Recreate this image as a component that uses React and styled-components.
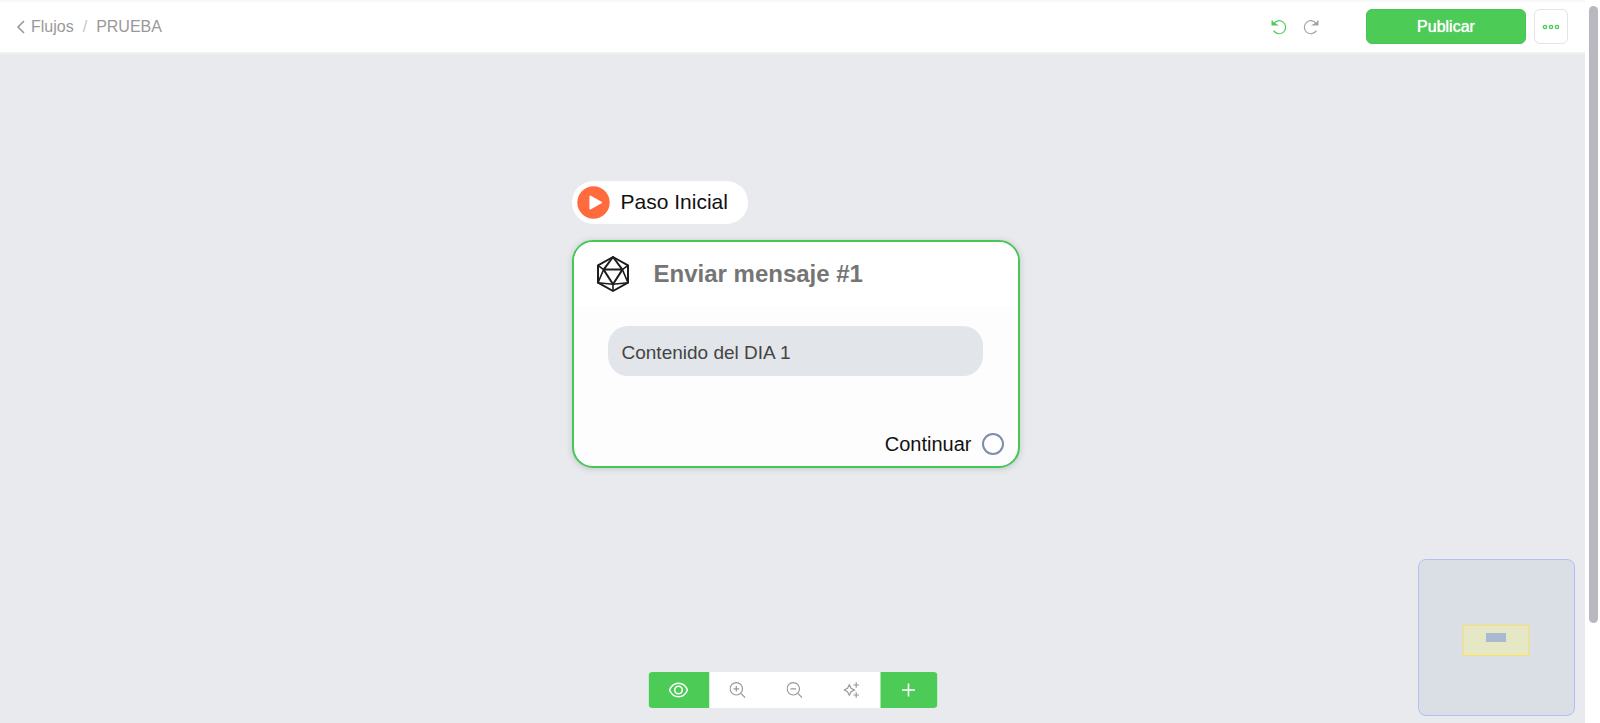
import React from "react";
import styled, { createGlobalStyle } from "styled-components";

const green = "#4dcb57";

const GlobalStyle = createGlobalStyle`
  * { box-sizing: border-box; }
  body {
    margin: 0;
    background: #fff;
    font-family: "Liberation Sans", Arial, sans-serif;
  }
  button { font-family: inherit; cursor: pointer; }
`;

const Page = styled.div`
  display: flex;
  height: 100vh;
  overflow: hidden;
`;

const Main = styled.main`
  flex: 1;
  min-width: 0;
  display: flex;
  flex-direction: column;
`;

const ScrollTrack = styled.div`
  width: 15px;
  flex: none;
  padding: 6px 2px 0 4px;
  background: #fff;
`;

const ScrollThumb = styled.div`
  height: 86%;
  border-radius: 5px;
  background: #b9b8be;
`;

const Header = styled.header`
  display: flex;
  align-items: center;
  justify-content: space-between;
  height: 54px;
  flex: none;
  padding: 0 17px 1px 15px;
  background: #fff;
  border-top: 2px solid #f4f9f8;
  border-bottom: 2px solid #f1f1f4;
`;

const Breadcrumb = styled.nav`
  display: flex;
  align-items: center;
  font-size: 16px;
  line-height: 20px;
  color: #999;
`;

const BackLink = styled.a`
  display: flex;
  align-items: center;
  gap: 4px;
  color: inherit;
  text-decoration: none;
`;

const Separator = styled.span`
  margin: 0 9px;
  color: #c3c6ce;
`;

const Actions = styled.div`
  display: flex;
  align-items: center;
  gap: 8px;
`;

const History = styled.div`
  display: flex;
  gap: 16px;
  margin-right: 39px;
`;

const IconButton = styled.button`
  display: flex;
  padding: 0;
  border: 0;
  background: none;
  color: ${(p) => (p.$active ? green : "#a3a3a3")};
`;

const PublishButton = styled.button`
  width: 160px;
  height: 35px;
  border: 1px solid #47c451;
  border-radius: 6px;
  background: ${green};
  color: #fff;
  font-size: 16px;
  text-shadow: 0 0 1px #fff;
`;

const MoreButton = styled.button`
  display: flex;
  align-items: center;
  justify-content: center;
  width: 34px;
  height: 35px;
  padding: 0;
  border: 1px solid #e3e3e8;
  border-radius: 6px;
  background: #fff;
  color: ${green};
`;

const Canvas = styled.section`
  position: relative;
  flex: 1;
  overflow: hidden;
  background: #e9eaee;
`;

const Node = styled.div`
  position: absolute;
  top: 127px;
  left: calc(50% - 221px);
  width: 448px;
  display: flex;
  flex-direction: column;
  align-items: flex-start;
  gap: 16px;
  color: #111;
`;

const StartPill = styled.div`
  display: flex;
  align-items: center;
  gap: 11px;
  height: 43px;
  padding: 0 20px 1px 5px;
  border-radius: 22px;
  background: #fff;
  font-size: 21px;
`;

const Card = styled.article`
  width: 100%;
  border: 2px solid #45c852;
  border-radius: 21px;
  background: #fdfdfd;
  box-shadow: 0 1px 6px rgba(60, 64, 80, 0.22);
  overflow: hidden;
`;

const CardHeader = styled.div`
  display: flex;
  align-items: center;
  gap: 24px;
  height: 64px;
  padding: 0 22px;
  background: #fff;
`;

const CardTitle = styled.h2`
  margin: 0;
  font-size: 24px;
  line-height: 28px;
  color: #757575;
`;

const Message = styled.p`
  margin: 20px 35px 0 34px;
  padding: 4px 14px 0;
  border-radius: 20px;
  background: #e2e5ea;
  color: #444;
  font-size: 19px;
  line-height: 46px;
`;

const CardFooter = styled.div`
  display: flex;
  align-items: center;
  justify-content: flex-end;
  gap: 10px;
  margin-top: 57px;
  padding: 0 14px 11px;
  font-size: 20px;
  line-height: 22px;
`;

const Port = styled.button`
  width: 22px;
  height: 22px;
  padding: 0;
  border: 2px solid #7f8daa;
  border-radius: 50%;
  background: #fff;
`;

const Toolbar = styled.div`
  position: absolute;
  bottom: 15px;
  left: 50%;
  transform: translateX(-50%);
  display: flex;
  height: 36px;
  border-radius: 4px;
  background: #fff;
  overflow: hidden;
`;

const ToolButton = styled.button`
  display: flex;
  align-items: center;
  justify-content: center;
  width: ${(p) => (p.$wide ? 61 : 57)}px;
  padding: 0;
  border: 0;
  background: ${(p) => (p.$filled ? green : "#fff")};
  color: ${(p) => (p.$filled ? "#fff" : "#999")};
`;

const MiniMap = styled.div`
  position: absolute;
  right: 10px;
  bottom: 7px;
  display: flex;
  width: 157px;
  height: 157px;
  border: 1px solid #b6bdf5;
  border-radius: 8px;
  background: #dadfe6;
`;

const MiniViewport = styled.div`
  display: flex;
  justify-content: center;
  align-items: flex-start;
  width: 66px;
  height: 31px;
  margin: 65px 0 0 44px;
  padding-top: 7px;
  border: 1px solid #fce35a;
  background: #e6e8c5;
`;

const MiniNode = styled.div`
  width: 20px;
  height: 9px;
  background: #abb8d2;
`;

const Icon = ({ size = 16, width = 1.2, children, ...rest }) => (
  <svg
    width={size}
    height={size}
    viewBox={`0 0 ${size} ${size}`}
    fill="none"
    stroke="currentColor"
    strokeWidth={width}
    aria-hidden="true"
    {...rest}
  >
    {children}
  </svg>
);

const ChevronIcon = () => (
  <svg width="12" height="16" viewBox="0 0 12 16" fill="none" stroke="#999" strokeWidth="1.6" aria-hidden="true">
    <path d="M9 2 L3 8 L9 14" />
  </svg>
);

const UndoIcon = () => (
  <Icon>
    <path d="M2.4 5.2 A6.5 6.5 0 1 1 2.6 11.6" />
    <path d="M1.2 1.6 V5.8 H5.6 L1.2 3" strokeWidth="1.4" />
  </Icon>
);

const RedoIcon = () => (
  <Icon>
    <path d="M13.6 5.2 A6.5 6.5 0 1 0 13.4 11.6" />
    <path d="M14.8 1.6 V5.8 H10.4 L14.8 3" strokeWidth="1.4" />
  </Icon>
);

const DotsIcon = () => (
  <svg width="18" height="6" viewBox="0 0 18 6" fill="none" stroke="currentColor" strokeWidth="1.4" aria-hidden="true">
    <circle cx="3" cy="3" r="1.6" />
    <circle cx="9" cy="3" r="1.6" />
    <circle cx="15" cy="3" r="1.6" />
  </svg>
);

const PlayIcon = () => (
  <svg width="33" height="33" viewBox="0 0 33 33" aria-hidden="true">
    <circle cx="16.5" cy="16.5" r="16.2" fill="#ff6b3d" />
    <path d="M13.4 10.6 L24 16.5 L13.4 22.4 Z" fill="#fff" stroke="#fff" strokeWidth="2" strokeLinejoin="round" />
  </svg>
);

const PolyhedronIcon = () => (
  <svg width="34" height="38" viewBox="0 0 34 38" fill="none" stroke="#1d1d1d" strokeWidth="2" strokeLinejoin="round" aria-hidden="true">
    <path d="M17 2 L32 10.3 V27.7 L17 36 L2 27.7 V10.3 Z" />
    <path d="M17 2 L7.6 14.6 H26.4 Z M7.6 14.6 L17 29.2 L26.4 14.6" />
    <path d="M2 10.3 L7.6 14.6 L2 27.7 L17 29.2 L32 27.7 L26.4 14.6 L32 10.3 M17 29.2 V36" strokeWidth="1.6" />
  </svg>
);

const EyeIcon = () => (
  <svg width="20" height="16" viewBox="0 0 20 16" fill="none" stroke="currentColor" strokeWidth="1.5" aria-hidden="true">
    <path d="M1 8 C3 3.4 6.3 1.2 10 1.2 S17 3.4 19 8 C17 12.6 13.7 14.8 10 14.8 S3 12.6 1 8 Z" />
    <circle cx="10" cy="8" r="3.8" />
  </svg>
);

const ZoomIcon = ({ plus }) => (
  <Icon>
    <circle cx="6.8" cy="6.8" r="6.2" />
    <path d="M11.3 11.3 L15.7 15.7 M4 6.8 H9.6" />
    {plus && <path d="M6.8 4 V9.6" />}
  </Icon>
);

const SparkleIcon = () => (
  <Icon>
    <path d="M5.8 2.8 L7.6 6.2 L11 8 L7.6 9.8 L5.8 13.2 L4 9.8 L0.6 8 L4 6.2 Z" />
    <path d="M12.7 0.2 V5.8 M9.9 3 H15.5 M12.7 10.2 V15.8 M9.9 13 H15.5" />
  </Icon>
);

const PlusIcon = () => (
  <Icon size={14} width={1.6}>
    <path d="M7 0.5 V13.5 M0.5 7 H13.5" />
  </Icon>
);

export default function App() {
  return (
    <>
      <GlobalStyle />
      <Page>
        <Main>
          <Header>
            <Breadcrumb aria-label="Ruta">
              <BackLink href="#flujos">
                <ChevronIcon />
                Flujos
              </BackLink>
              <Separator>/</Separator>
              <span>PRUEBA</span>
            </Breadcrumb>
            <Actions>
              <History>
                <IconButton $active aria-label="Deshacer"><UndoIcon /></IconButton>
                <IconButton aria-label="Rehacer"><RedoIcon /></IconButton>
              </History>
              <PublishButton>Publicar</PublishButton>
              <MoreButton aria-label="Más opciones"><DotsIcon /></MoreButton>
            </Actions>
          </Header>
          <Canvas>
            <Node>
              <StartPill>
                <PlayIcon />
                Paso Inicial
              </StartPill>
              <Card>
                <CardHeader>
                  <PolyhedronIcon />
                  <CardTitle>Enviar mensaje #1</CardTitle>
                </CardHeader>
                <Message>Contenido del DIA 1</Message>
                <CardFooter>
                  Continuar
                  <Port aria-label="Continuar" />
                </CardFooter>
              </Card>
            </Node>
            <Toolbar>
              <ToolButton $filled $wide aria-label="Vista previa"><EyeIcon /></ToolButton>
              <ToolButton aria-label="Acercar"><ZoomIcon plus /></ToolButton>
              <ToolButton aria-label="Alejar"><ZoomIcon /></ToolButton>
              <ToolButton aria-label="Ordenar"><SparkleIcon /></ToolButton>
              <ToolButton $filled aria-label="Añadir"><PlusIcon /></ToolButton>
            </Toolbar>
            <MiniMap>
              <MiniViewport>
                <MiniNode />
              </MiniViewport>
            </MiniMap>
          </Canvas>
        </Main>
        <ScrollTrack>
          <ScrollThumb />
        </ScrollTrack>
      </Page>
    </>
  );
}
